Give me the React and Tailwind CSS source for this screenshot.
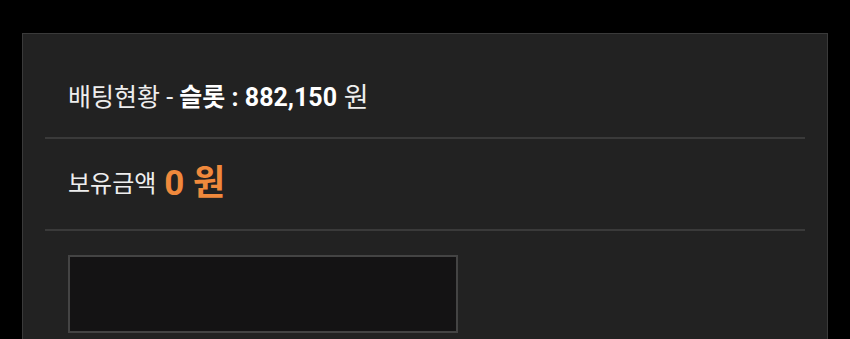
export default function App() {
  return (
    <div
      className="min-h-[339px] bg-black pt-[33px] pl-[22px] pr-[22px]"
      style={{ fontFamily: 'Roboto, "Noto Sans CJK KR", sans-serif' }}
    >
      <div className="w-[806px] h-[306px] bg-[#222222] border border-[#3a3a3a] border-b-0 px-[22px] pt-[25px]">
        <div className="h-[80px] flex items-center pl-[23px] border-b-2 border-[#3a3a3a] text-[25px] text-[#eeeeee]">
          <span>배팅현황 -&nbsp;</span>
          <span className="font-bold text-white">슬롯 : 882,150</span>
          <span className="text-[27px]">&nbsp;원</span>
        </div>

        <div className="h-[92px] flex items-center pl-[23px] border-b-2 border-[#3a3a3a]">
          <span className="text-[24px] text-[#eeeeee]">보유금액</span>
          <span className="ml-[8px] text-[35px] font-bold text-[#f0893c]">0 원</span>
        </div>

        <div className="pl-[23px] pt-[24px]">
          <div className="w-[390px] h-[78px] bg-[#141314] border-2 border-[#444444]"></div>
        </div>
      </div>
    </div>
  );
}
